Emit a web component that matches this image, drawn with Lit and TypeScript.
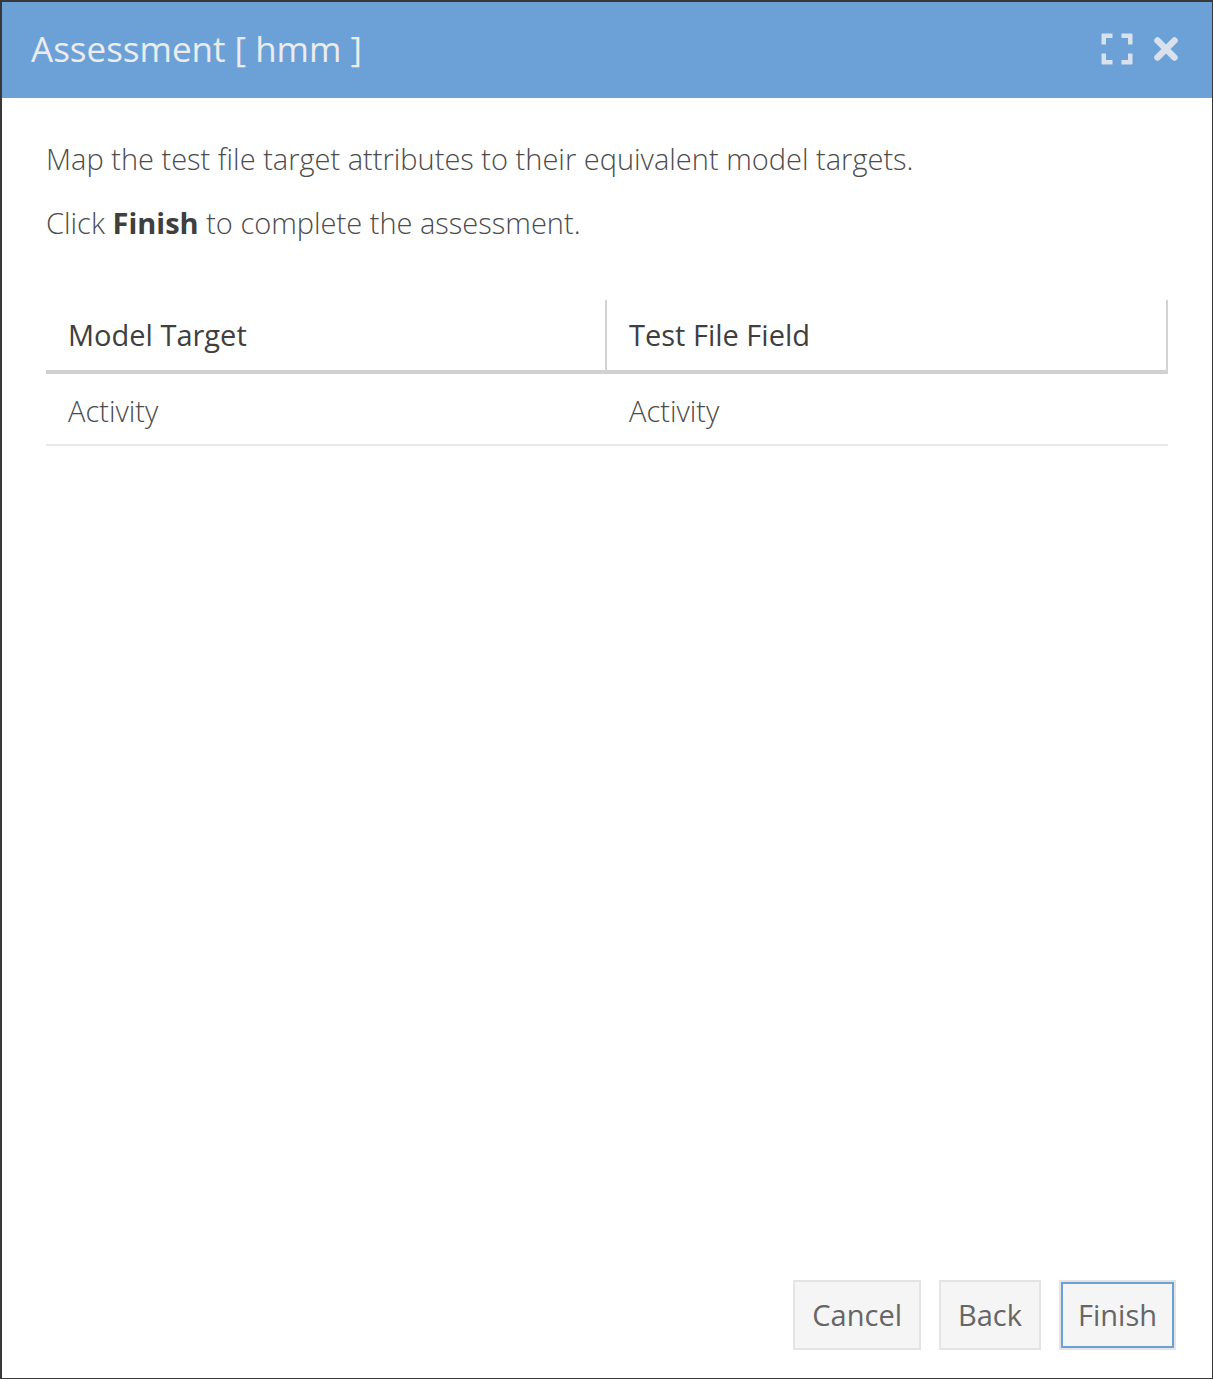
import { LitElement, html, css } from "lit";
import { customElement, property, state } from "lit/decorators.js";

interface Mapping {
  target: string;
  field: string;
}

@customElement("app-root")
export class AppRoot extends LitElement {
  @property() name = "hmm";

  @state() private mappings: Mapping[] = [{ target: "Activity", field: "Activity" }];

  static styles = css`
    :host {
      display: block;
      font-family: "Open Sans", "Noto Sans", sans-serif;
      font-size: 29px;
      font-weight: 300;
      line-height: 40px;
      color: #4c4c4c;
    }
    * {
      box-sizing: border-box;
    }
    .dialog {
      display: flex;
      flex-direction: column;
      min-height: 100vh;
      background: #fff;
      border: solid #38383a;
      border-width: 2px 1px 1px 2px;
    }
    .header {
      display: flex;
      align-items: center;
      justify-content: space-between;
      min-height: 96px;
      padding: 0 33px 2px 29px;
      background: #6ca1d8;
    }
    .title {
      margin: 0;
      font-size: 35px;
      font-weight: 400;
      line-height: 48px;
      color: #ececec;
    }
    .tools {
      display: flex;
      align-items: center;
      gap: 19px;
    }
    .tool {
      display: flex;
      padding: 0;
      border: 0;
      background: none;
      color: #d8e1ec;
      cursor: pointer;
    }
    .content {
      flex: 1;
      padding: 41px 44px 24px;
    }
    .text {
      margin: 0 0 24px;
    }
    .strong {
      font-weight: 700;
      color: #3f3f3f;
    }
    .grid {
      width: 100%;
      margin-top: 57px;
      border-collapse: separate;
      border-spacing: 0;
      table-layout: fixed;
      text-align: left;
    }
    .head {
      height: 74px;
      padding: 0 22px;
      font-weight: 400;
      color: #3f3f3f;
      border-right: 2px solid #d3d3d3;
      border-bottom: 4px solid #d0d0d0;
    }
    .cell {
      height: 72px;
      padding: 4px 22px 0;
      border-bottom: 2px solid #e9e9e9;
    }
    .footer {
      display: flex;
      justify-content: flex-end;
      gap: 18px;
      padding: 0 36px 28px;
    }
    .button {
      height: 70px;
      padding: 0 17px;
      font: inherit;
      font-weight: 400;
      color: #666;
      background: #f5f5f5;
      border: 2px solid #e4e4e4;
      cursor: pointer;
    }
    .primary {
      box-shadow: inset 0 0 0 2px #6ca1d8;
    }
  `;

  render() {
    return html`
      <section class="dialog" role="dialog" aria-labelledby="title">
        <header class="header">
          <h1 class="title" id="title">Assessment [ ${this.name} ]</h1>
          <div class="tools">
            <button class="tool" type="button" aria-label="Maximize">
              <svg width="34" height="34" viewBox="0 0 34 34" fill="currentColor" aria-hidden="true">
                <path d="M2.500 1.500H12.500v4.500H6v6.500H1.500V2.500Q1.500 1.500 2.500 1.500zM21.500 1.500h10Q32.500 1.500 32.500 2.500V12.500h-4.500V6h-6.500zM1.500 21.500H6v6.500h6.500v4.500H2.500Q1.500 32.500 1.500 31.500zM28 21.500h4.500v10Q32.500 32.500 31.500 32.500H21.500V28H28z" />
              </svg>
            </button>
            <button class="tool" type="button" aria-label="Close">
              <svg width="26" height="26" viewBox="0 0 26 26" fill="none" stroke="currentColor" stroke-width="6.500" stroke-linecap="round" aria-hidden="true">
                <path d="M4.500 4.500l17 17M21.500 4.500l-17 17" />
              </svg>
            </button>
          </div>
        </header>
        <div class="content">
          <p class="text">Map the test file target attributes to their equivalent model targets.</p>
          <p class="text">Click <b class="strong">Finish</b> to complete the assessment.</p>
          <table class="grid">
            <thead>
              <tr>
                <th class="head" scope="col">Model Target</th>
                <th class="head" scope="col">Test File Field</th>
              </tr>
            </thead>
            <tbody>
              ${this.mappings.map(
                (m) => html`<tr>
                  <td class="cell">${m.target}</td>
                  <td class="cell">${m.field}</td>
                </tr>`,
              )}
            </tbody>
          </table>
        </div>
        <footer class="footer">
          <button class="button" type="button">Cancel</button>
          <button class="button" type="button">Back</button>
          <button class="button primary" type="button">Finish</button>
        </footer>
      </section>
    `;
  }
}
